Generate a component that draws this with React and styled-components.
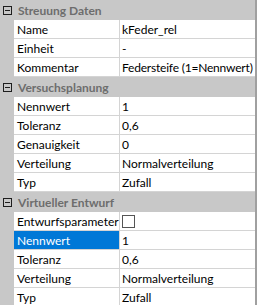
import React from 'react';
import styled, { createGlobalStyle } from 'styled-components';

const GlobalStyle = createGlobalStyle`
  html, body {
    margin: 0;
    padding: 0;
    background: #ffffff;
  }
  body {
    font-family: Lato, 'Noto Sans', sans-serif;
    font-size: 12px;
  }
`;

const Grid = styled.div`
  width: 257px;
  height: 305px;
  overflow: hidden;
  box-sizing: border-box;
  background: #c8c8c8;
  border-right: 2px solid #a0a0a0;
`;

const Header = styled.div`
  display: flex;
  align-items: center;
  height: 20px;
  background: #c8c8c8;
`;

const Toggle = styled.span`
  box-sizing: border-box;
  width: 9px;
  height: 9px;
  margin: 0 6px 0 3px;
  border: 1px solid #1e1e1e;
  position: relative;
  &::after {
    content: '';
    position: absolute;
    left: 1px;
    right: 1px;
    top: 3px;
    height: 1px;
    background: #1e1e1e;
  }
`;

const Title = styled.span`
  font-weight: bold;
  color: #6d6d6d;
  white-space: nowrap;
`;

const Row = styled.div`
  display: flex;
  height: 19px;
  padding-left: 14px;
`;

const Cell = styled.div`
  box-sizing: border-box;
  display: flex;
  align-items: center;
  height: 19px;
  border-bottom: 1px solid #d4d4d4;
  white-space: nowrap;
  overflow: hidden;
  background: ${p => (p.$selected ? '#0078d7' : '#ffffff')};
  color: ${p => (p.$selected ? '#ffffff' : '#000000')};
`;

const NameCell = styled(Cell)`
  width: 106px;
  padding-left: 3px;
  border-right: 1px solid #d4d4d4;
`;

const ValueCell = styled(Cell)`
  flex: 1;
  padding-left: 2px;
  letter-spacing: ${p => (p.$tight ? '-0.2px' : 'normal')};
`;

const Check = styled.span`
  box-sizing: border-box;
  width: 13px;
  height: 13px;
  border: 1px solid #555555;
  background: #ffffff;
`;

const data = [
  {
    title: 'Streuung Daten',
    rows: [
      ['Name', 'kFeder_rel'],
      ['Einheit', '-'],
      ['Kommentar', 'Federsteife (1=Nennwert)'],
    ],
  },
  {
    title: 'Versuchsplanung',
    rows: [
      ['Nennwert', '1'],
      ['Toleranz', '0,6'],
      ['Genauigkeit', '0'],
      ['Verteilung', 'Normalverteilung'],
      ['Typ', 'Zufall'],
    ],
  },
  {
    title: 'Virtueller Entwurf',
    rows: [
      ['Entwurfsparameter', null],
      ['Nennwert', '1', true],
      ['Toleranz', '0,6'],
      ['Verteilung', 'Normalverteilung'],
      ['Typ', 'Zufall'],
    ],
  },
];

export default function App() {
  return (
    <>
      <GlobalStyle />
      <Grid>
        {data.map(cat => (
          <div key={cat.title}>
            <Header>
              <Toggle />
              <Title>{cat.title}</Title>
            </Header>
            {cat.rows.map(([name, value, selected]) => (
              <Row key={name}>
                <NameCell $selected={selected}>{name}</NameCell>
                <ValueCell $tight={value && value.length > 20}>
                  {value === null ? <Check /> : value}
                </ValueCell>
              </Row>
            ))}
          </div>
        ))}
      </Grid>
    </>
  );
}
